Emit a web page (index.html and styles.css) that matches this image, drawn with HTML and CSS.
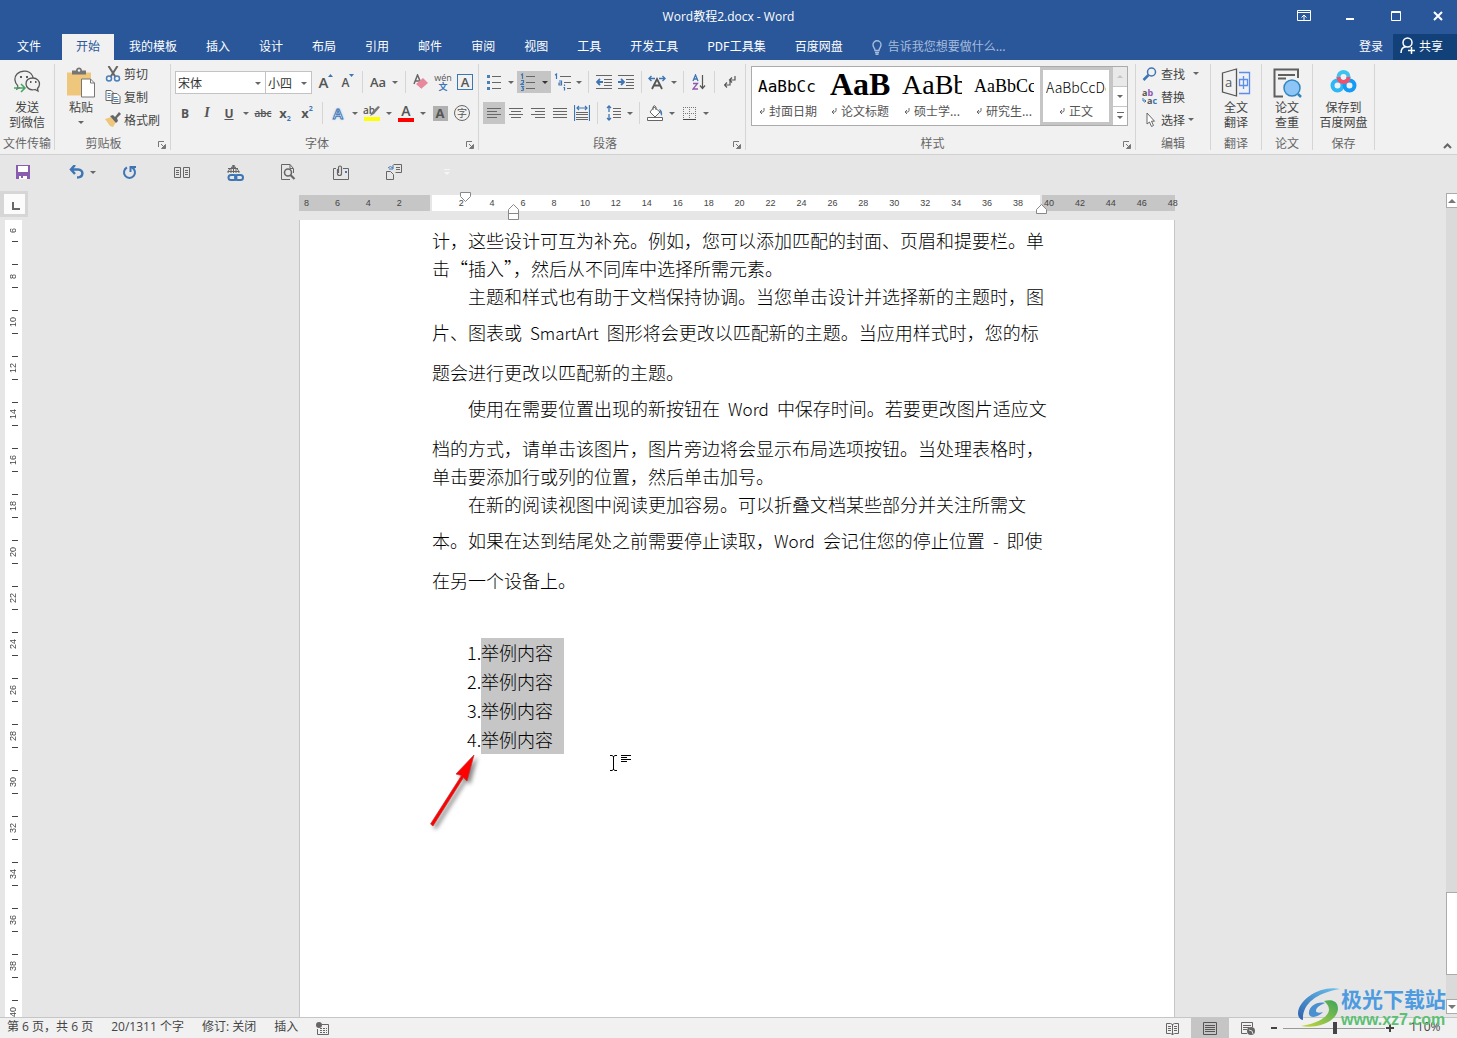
FILE: index.html
```html
<!DOCTYPE html>
<html lang="zh-CN">
<head>
<meta charset="utf-8">
<title>Word教程2.docx - Word</title>
<link rel="stylesheet" href="styles.css">
</head>
<body>
<svg class="defs" aria-hidden="true">
  <symbol id="launch" viewBox="0 0 8 8"><path d="M.5 6V.5H6" fill="none" stroke="#777"/><path d="M3 3l3 3M7.500 3.500v4h-4z" fill="#777" stroke="#777"/></symbol>
  <symbol id="ret" viewBox="0 0 6 6"><path d="M5 0v2.500q0 1.500-1.500 1.500H1M3 2L1 4l2 2" fill="none" stroke="#666"/></symbol>
</svg>

<header class="titlebar">
  <h1 class="doc-title">Word教程2.docx - Word</h1>
  <div class="win-buttons">
    <button class="win" aria-label="功能区显示选项"><svg width="14" height="12" viewBox="0 0 14 12" fill="none" stroke="#fff"><path d="M.5.5h13v10H.5zM.5 2.500h13M7 10V5M4.500 7.500L7 5l2.500 2.500"/></svg></button>
    <button class="win" aria-label="最小化"><svg width="10" height="12" viewBox="0 0 10 12"><path d="M1 8h8v2H1z" fill="#fff"/></svg></button>
    <button class="win" aria-label="最大化"><svg width="10" height="10" viewBox="0 0 10 10"><path d="M.5.5h9v9h-9zM0 1.500h10" fill="none" stroke="#fff"/></svg></button>
    <button class="win" aria-label="关闭"><svg width="10" height="10" viewBox="0 0 10 10"><path d="M1 1l8 8M9 1L1 9" stroke="#fff" stroke-width="2"/></svg></button>
  </div>
</header>

<nav class="tabs">
  <button class="tab file">文件</button>
  <button class="tab active">开始</button>
  <button class="tab">我的模板</button>
  <button class="tab">插入</button>
  <button class="tab">设计</button>
  <button class="tab">布局</button>
  <button class="tab">引用</button>
  <button class="tab">邮件</button>
  <button class="tab">审阅</button>
  <button class="tab">视图</button>
  <button class="tab">工具</button>
  <button class="tab">开发工具</button>
  <button class="tab">PDF工具集</button>
  <button class="tab">百度网盘</button>
  <label class="tell"><svg width="10" height="15" viewBox="0 0 10 15" fill="none" stroke="#a6bbdc" stroke-width="1.400"><path d="M3 10.500C3 8 1 7.500 1 4.800a4 4 0 0 1 8 0C9 7.500 7 8 7 10.500zM3 12.500h4M3.500 14.300h3"/></svg><input type="text" placeholder="告诉我您想要做什么..." aria-label="告诉我您想要做什么"></label>
  <a class="login" href="#">登录</a>
  <button class="share"><svg width="15" height="17" viewBox="0 0 15 17" fill="none" stroke="#fff" stroke-width="1.500"><circle cx="7.500" cy="5.500" r="4.500"/><path d="M1 16c0-4 2-6 5-6.500M8 13.500h7M11.500 10v7"/></svg>共享</button>
</nav>

<section class="ribbon">
  <div class="group g-send">
    <div class="content">
      <button class="big"><svg width="28" height="28" viewBox="0 0 28 28" fill="none" stroke="#5a5a5a" stroke-width="1.300"><path d="M5 17l-1 3 3-1.500M5 17C1 13 1 8 4 5c4-4 12-4 15 1 1 1.500 1 2 1 3"/><path d="M13 15c0-4 3-6 7-6s6.500 3 6.500 6c0 2-1 3.500-2 4.500l.5 2.500-3-1.500c-5 1.500-9-2-9-5.500z"/><path d="M7 8h2M13 8h2M17 13h1.500M22 13h1.500" stroke-width="2"/><path d="M1 19h10M8 15l4 4-4 4" stroke="#4aa564" stroke-width="1.600"/></svg><span>发送<br>到微信</span></button>
    </div>
    <div class="caption"><span>文件传输</span></div>
  </div>

  <div class="group g-clip">
    <div class="content row">
      <button class="big paste"><svg width="28" height="31" viewBox="0 0 28 31"><path d="M0 5h24v23H0z" fill="#eec67c"/><path d="M5 7V3h4c0-4 6-4 6 0h4v4z" fill="#757575"/><circle cx="12" cy="3" r="1.200" fill="#f1f1f1"/><path d="M14.500 11.500h9l4 4v14h-13z" fill="#fff" stroke="#777"/><path d="M23.500 11.500v4h4" fill="none" stroke="#777"/></svg><span>粘贴</span><i class="arrow"></i></button>
      <div class="stack">
        <button class="line"><svg width="15" height="16" viewBox="0 0 15 16" fill="none"><path d="M3 0l7 11M12 0L5 11" stroke="#666" stroke-width="2"/><circle cx="3.500" cy="12.500" r="2.500" stroke="#4a7fb8" stroke-width="1.500"/><circle cx="11.500" cy="12.500" r="2.500" stroke="#4a7fb8" stroke-width="1.500"/></svg>剪切</button>
        <button class="line"><svg width="15" height="15" viewBox="0 0 15 15" fill="#fff" stroke="#666"><path d="M.5 1.500h5l2 2v8h-7zM6.500 4.500h5l3 3v7h-8z"/><path d="M2 4.500h3M2 6.500h3M2 8.500h3M8 8.500h4M8 10.500h5M8 12.500h5" stroke="#4a7fb8"/></svg>复制</button>
        <button class="line"><svg width="16" height="15" viewBox="0 0 16 15"><path d="M0 7l6-2 5 5-3 5-3-1z" fill="#eec67c"/><path d="M5 4l3-1 2 2 4-5 2 2-4 4 1 3-2 2z" fill="#666"/></svg>格式刷</button>
      </div>
    </div>
    <div class="caption"><span>剪贴板</span><button class="launch" aria-label="剪贴板选项"><svg width="8" height="8"><use href="#launch"/></svg></button></div>
  </div>

  <div class="group g-font">
    <div class="content rows">
      <div class="row">
        <label class="combo face"><select aria-label="字体"><option>宋体</option></select></label>
        <label class="combo size"><select aria-label="字号"><option>小四</option></select></label>
        <button class="ib after-combo" aria-label="增大字号"><b class="big-a">A</b><svg class="tri" width="5" height="3"><path d="M0 3L2.500 0 5 3z" fill="#3e76b5"/></svg></button>
        <button class="ib" aria-label="减小字号"><b class="small-a">A</b><svg class="tri" width="5" height="3"><path d="M0 0h5L2.500 3z" fill="#3e76b5"/></svg></button>
        <i class="sep narrow"></i>
        <button class="ib case">Aa</button><button class="car" aria-label="更改大小写"></button>
        <i class="sep"></i>
        <button class="ib" aria-label="清除格式"><svg width="16" height="16" viewBox="0 0 16 16"><path d="M1 10L4.500 1 8 9M2 7h4" fill="none" stroke="#666" stroke-width="1.500"/><path d="M3 11l7-6 5 5-7 6z" transform="translate(0 -1)" fill="#e8889c"/><path d="M3 11l5 4" stroke="#f1f1f1"/></svg></button>
        <button class="ib pinyin"><span>wén</span><b>文</b></button>
        <button class="ib" aria-label="字符边框"><b class="boxed">A</b></button>
      </div>
      <div class="row">
        <button class="ib bold">B</button>
        <button class="ib ital">I</button>
        <button class="ib under">U</button><button class="car" aria-label="下划线样式"></button>
        <button class="ib strike">abc</button>
        <button class="ib script">x<sub>2</sub></button>
        <button class="ib script">x<sup>2</sup></button>
        <i class="sep"></i>
        <button class="ib glow">A</button><button class="car" aria-label="文本效果"></button>
        <button class="ib" aria-label="突出显示"><svg width="18" height="17" viewBox="0 0 18 17"><text x="0" y="9" class="ab">ab</text><path d="M7 11l2-4 6-6 2 1-6 7z" fill="#777"/><path d="M1 12h16v4H1z" fill="#ff0"/></svg></button><button class="car" aria-label="突出显示颜色"></button>
        <button class="ib colour">A</button><button class="car" aria-label="字体颜色"></button>
        <button class="ib" aria-label="字符底纹"><b class="shaded">A</b></button>
        <button class="ib" aria-label="带圈字符"><span class="ring">字</span></button>
      </div>
    </div>
    <div class="caption"><span>字体</span><button class="launch" aria-label="字体选项"><svg width="8" height="8"><use href="#launch"/></svg></button></div>
  </div>

  <div class="group g-para">
    <div class="content rows">
      <div class="row">
        <button class="ib" aria-label="项目符号"><svg width="14" height="16" viewBox="0 0 14 16"><path d="M5 2.500h9M5 8.500h9M5 14.500h9" stroke="#666"/><path d="M0 1h3v3H0zM0 7h3v3H0zM0 13h3v3H0z" fill="#4a7fb8"/></svg></button><button class="car" aria-label="项目符号库"></button>
        <button class="ib on" aria-label="编号"><svg width="16" height="18" viewBox="0 0 16 18"><path d="M6 3.500h9M6 9.500h9M6 15.500h9" stroke="#666"/><path d="M1 2l1.500-1v5M1 7.500h2.500v2L1 11.500h3M1 13.500h2.500l-1 1.500 1 .5-.5 2H1" fill="none" stroke="#3e76b5" stroke-width="1.200"/></svg></button><button class="car on" aria-label="编号库"></button>
        <button class="ib" aria-label="多级列表"><svg width="17" height="18" viewBox="0 0 17 18"><path d="M6 3.500h11M10 9.500h7M13 15.500h4" stroke="#666"/><path d="M1 2l1.500-1v5M5 8h2.500v4H5v-2h2.500M10.500 11.500v1.500M9.500 14.500h1v3" fill="none" stroke="#3e76b5" stroke-width="1.200"/></svg></button><button class="car" aria-label="多级列表库"></button>
        <i class="sep narrow"></i>
        <button class="ib" aria-label="减少缩进"><svg width="16" height="14" viewBox="0 0 16 14"><path d="M0 .5h16M8 4.500h8M8 7.500h8M8 10.500h8M0 13.500h16" stroke="#666"/><path d="M7 7H1M4 4L1 7l3 3" fill="none" stroke="#3e76b5" stroke-width="1.800"/></svg></button>
        <button class="ib" aria-label="增加缩进"><svg width="16" height="14" viewBox="0 0 16 14"><path d="M0 .5h16M8 4.500h8M8 7.500h8M8 10.500h8M0 13.500h16" stroke="#666"/><path d="M0 7h6M3 4l3 3-3 3" fill="none" stroke="#3e76b5" stroke-width="1.800"/></svg></button>
        <i class="sep"></i>
        <button class="ib" aria-label="中文版式"><svg width="18" height="15" viewBox="0 0 18 15" fill="none"><path d="M4 14L9 4l5 10M6 10.500h6" stroke="#555" stroke-width="1.800"/><path d="M7 3.500H1M3.500 1L1 3.500 3.500 6M11 3.500h6M14.500 1L17 3.500 14.500 6" stroke="#3e76b5" stroke-width="1.400"/></svg></button><button class="car" aria-label="版式选项"></button>
        <i class="sep narrow"></i>
        <button class="ib" aria-label="排序"><svg width="14" height="16" viewBox="0 0 14 16" fill="none"><path d="M1 7l2.500-6L6 7M2 5h3" stroke="#3e76b5" stroke-width="1.300"/><path d="M1 9.500h4.500L1 15h5" stroke="#8f57ae" stroke-width="1.300"/><path d="M10.500 1v13M8 11.500l2.500 3 2.500-3" stroke="#555" stroke-width="1.200"/></svg></button>
        <i class="sep"></i>
        <button class="ib" aria-label="显示编辑标记"><svg width="12" height="12" viewBox="0 0 12 12" fill="none" stroke="#555" stroke-width="1.200"><path d="M11 0v4H6M8 1.500L5.500 4 8 6.500M6 5v4H1M3 6.500L.5 9 3 11.500"/></svg></button>
      </div>
      <div class="row">
        <button class="ib on" aria-label="左对齐"><svg width="15" height="11"><path d="M0 .5h14M0 3.500h10M0 6.500h14M0 9.500h10" stroke="#666"/></svg></button>
        <button class="ib" aria-label="居中"><svg width="15" height="11"><path d="M0 .5h14M2 3.500h10M0 6.500h14M2 9.500h10" stroke="#666"/></svg></button>
        <button class="ib" aria-label="右对齐"><svg width="15" height="11"><path d="M0 .5h14M4 3.500h10M0 6.500h14M4 9.500h10" stroke="#666"/></svg></button>
        <button class="ib" aria-label="两端对齐"><svg width="15" height="11"><path d="M0 .5h14M0 3.500h14M0 6.500h14M0 9.500h14" stroke="#666"/></svg></button>
        <button class="ib" aria-label="分散对齐"><svg width="16" height="16" viewBox="0 0 16 16" fill="none"><path d="M.5 0v16M15.500 0v16M3 3h10M5 1L3 3l2 2M11 1l2 2-2 2" stroke="#3e76b5" stroke-width="1.200"/><path d="M2 7.500h12M2 9.500h12M2 12.500h12M2 14.500h12" stroke="#666"/></svg></button>
        <i class="sep"></i>
        <button class="ib" aria-label="行距"><svg width="15" height="16" viewBox="0 0 15 16" fill="none"><path d="M7 3.500h8M7 6.500h8M7 9.500h8M7 12.500h8" stroke="#666"/><path d="M3 1v6M1 3l2-2 2 2M3 9v6M1 13l2 2 2-2" stroke="#3e76b5" stroke-width="1.300"/></svg></button><button class="car" aria-label="行距选项"></button>
        <i class="sep narrow"></i>
        <button class="ib" aria-label="底纹"><svg width="17" height="16" viewBox="0 0 17 16" fill="#fff" stroke="#666"><path d="M7 2l6 5-5 5-5-5z"/><path d="M6 5V2q1-3 3 0v3" fill="none"/><path d="M12 4q4 1 3 7-2-2-2-5z" fill="#3e76b5" stroke="none"/><path d="M.5 12.500h15v3H.5z"/></svg></button><button class="car" aria-label="底纹颜色"></button>
        <button class="ib" aria-label="边框"><svg width="13" height="13" viewBox="0 0 13 13" fill="none" stroke="#777"><path d="M.5 0v12M6.500 0v12M12.500 0v12M0 .5h13M0 6.500h13" stroke-dasharray="1 1"/><path d="M0 12.500h13" stroke="#444"/></svg></button><button class="car" aria-label="边框样式"></button>
      </div>
    </div>
    <div class="caption"><span>段落</span><button class="launch" aria-label="段落选项"><svg width="8" height="8"><use href="#launch"/></svg></button></div>
  </div>

  <div class="group g-style">
    <div class="content">
      <div class="gallery">
        <button class="style"><span class="sample hei">AaBbCc</span><span class="name"><svg width="6" height="6"><use href="#ret"/></svg>封面日期</span></button>
        <button class="style"><span class="sample thesis">AaBb</span><span class="name"><svg width="6" height="6"><use href="#ret"/></svg>论文标题</span></button>
        <button class="style"><span class="sample master">AaBb</span><span class="name"><svg width="6" height="6"><use href="#ret"/></svg>硕士学...</span></button>
        <button class="style"><span class="sample grad">AaBbCc</span><span class="name"><svg width="6" height="6"><use href="#ret"/></svg>研究生...</span></button>
        <button class="style chosen"><span class="sample body">AaBbCcDd</span><span class="name"><svg width="6" height="6"><use href="#ret"/></svg>正文</span></button>
        <div class="scroller">
          <button class="up" aria-label="上一行"></button>
          <button class="down" aria-label="下一行"></button>
          <button class="more" aria-label="其他样式"></button>
        </div>
      </div>
    </div>
    <div class="caption"><span>样式</span><button class="launch" aria-label="样式选项"><svg width="8" height="8"><use href="#launch"/></svg></button></div>
  </div>

  <div class="group g-edit">
    <div class="content">
      <div class="stack">
        <button class="line"><svg width="15" height="14" viewBox="0 0 15 14" fill="none" stroke="#3e76b5"><circle cx="9" cy="5" r="4" stroke-width="1.500"/><path d="M6 8l-5 5" stroke-width="2.500"/></svg>查找<i class="arrow far"></i></button>
        <button class="line"><svg width="16" height="16" viewBox="0 0 16 16"><text x="0" y="7" class="rep">a<tspan class="purple">b</tspan></text><text x="5" y="15" class="rep">a<tspan class="blue">c</tspan></text><path d="M1 9v3h3M2.500 10.500L4 12l-1.500 1.500" fill="none" stroke="#3e76b5"/></svg>替换</button>
        <button class="line"><svg width="15" height="15" viewBox="0 0 15 15" fill="#fff" stroke="#666"><path d="M4.500 1v11l2.500-2 2 4.500 2-1-2-4.300h3z"/></svg>选择<i class="arrow"></i></button>
      </div>
    </div>
    <div class="caption"><span>编辑</span></div>
  </div>

  <div class="group g-tool">
    <div class="content">
      <button class="big"><svg width="30" height="30" viewBox="0 0 30 30" fill="none"><path d="M1.500 5L15.500 1v27l-14-4z" stroke="#555" stroke-width="1.300"/><path d="M18 4.500h10.500v21H18" stroke="#5b8def" stroke-width="1.300"/><text x="4" y="19" class="tr-a">a</text><path d="M18.500 11.500h8v6h-8zM22.500 8v13" stroke="#5b8def" stroke-width="1.300"/></svg><span>全文<br>翻译</span></button>
    </div>
    <div class="caption"><span>翻译</span></div>
  </div>
  <div class="group g-tool">
    <div class="content">
      <button class="big"><svg width="30" height="30" viewBox="0 0 30 30" fill="none"><path d="M26 10V1.500H2.500v27H11M6 7h17M6 10.500h8" stroke="#5f5f5f" stroke-width="2"/><circle cx="20" cy="20" r="8" fill="#8ec5f7" stroke="#2f86c0" stroke-width="1.500"/><path d="M26 26l3 3" stroke="#2f86c0" stroke-width="2.500"/></svg><span>论文<br>查重</span></button>
    </div>
    <div class="caption"><span>论文</span></div>
  </div>
  <div class="group g-save">
    <div class="content">
      <button class="big"><svg width="28" height="28" viewBox="0 0 28 28" fill="none" stroke-width="4"><circle cx="7.500" cy="16.500" r="5" stroke="#2db8f5"/><circle cx="19.500" cy="16.500" r="5" stroke="#149bf5"/><circle cx="13.500" cy="8" r="5" stroke="#3cc3f0"/><path d="M8.500 8a5 5 0 0 0 10 0" stroke="#f14f6c"/></svg><span>保存到<br>百度网盘</span></button>
    </div>
    <div class="caption"><span>保存</span></div>
  </div>
  <button class="collapse" aria-label="折叠功能区"><svg width="9" height="6"><path d="M1 5l3.500-3.500L8 5" fill="none" stroke="#666" stroke-width="2"/></svg></button>
</section>

<div class="quick">
  <div class="slot"><button class="ib" aria-label="保存"><svg width="14" height="14" viewBox="0 0 14 14"><path d="M0 0h14v14H0z" fill="#8a5cb0"/><path d="M2 1h10v6H2zM3 9h8v5H3z" fill="#fff"/><path d="M3 9h8v2H3zM5 11h2v2H5z" fill="#8a5cb0"/></svg></button></div>
  <div class="slot"><button class="ib" aria-label="撤消"><svg width="15" height="14" viewBox="0 0 15 14" fill="none" stroke="#3e76b5" stroke-width="2.500"><path d="M6 0L2 4.500 6 9M2 4.500h7c6 0 6 8-1 8"/></svg></button><button class="car" aria-label="撤消列表"></button></div>
  <div class="slot"><button class="ib" aria-label="恢复"><svg width="15" height="15" viewBox="0 0 15 15" fill="none" stroke="#3e76b5" stroke-width="2"><path d="M5 2.500a5.500 5.500 0 1 0 5 0M8.500 7V2H14"/></svg></button></div>
  <div class="slot"><button class="ib" aria-label="阅读视图"><svg width="16" height="11" viewBox="0 0 16 11" fill="none" stroke="#666"><path d="M.5.500h6v10h-6zM9.500.500h6v10h-6zM2 3.500h3M2 5.500h3M2 7.500h3M11 3.500h3M11 5.500h3M11 7.500h3"/></svg></button></div>
  <div class="slot"><button class="ib" aria-label="超链接"><svg width="17" height="17" viewBox="0 0 17 17" fill="none" stroke="#666"><path d="M1 9a5.500 5.500 0 1 1 11 0M1 4.500h10M.5 7.500h12M6.500 1v8M4 9q-1-4 2-8M9 9q1-4-2-8"/><rect x="1.500" y="11" width="8" height="5" rx="2.500" stroke="#3e76b5" stroke-width="2"/><rect x="8" y="11" width="8" height="5" rx="2.500" stroke="#3e76b5" stroke-width="2"/></svg></button></div>
  <div class="slot"><button class="ib" aria-label="打印预览"><svg width="15" height="16" viewBox="0 0 15 16" fill="none" stroke="#666"><path d="M12.500 9V4.500L9 .5H.5v15H9M9 .5v4h3"/><circle cx="7" cy="8.500" r="3.500" stroke-width="1.600"/><path d="M9.500 11l4 4" stroke-width="2.200"/></svg></button></div>
  <div class="slot"><button class="ib" aria-label="邮件附件"><svg width="16" height="15" viewBox="0 0 16 15" fill="none" stroke="#666"><path d="M3 3.500H.5v11h15v-11H10"/><path d="M4.500 4v4.500a2 2 0 0 0 4 0V2.500a1.500 1.500 0 0 0-3 0V8" stroke-width="1.200"/><path d="M12 6h2v2h-2z" fill="#3e76b5" stroke="none"/></svg></button></div>
  <div class="slot"><button class="ib" aria-label="插入文档"><svg width="16" height="16" viewBox="0 0 16 16" fill="none" stroke="#666"><path d="M.5 7.500h4l3 3v5h-7zM7.500.500h8v8h-6M10 3.500h4M10 5.500h4"/><path d="M2 4q2-3 5 0M7 1v4H3" stroke="#3e76b5"/></svg></button></div>
  <div class="slot"><button class="ib faint" aria-label="自定义快速访问工具栏"><svg width="6" height="7"><path d="M0 .5h6" stroke="#f6f6f6"/><path d="M0 3h6L3 6z" fill="#f6f6f6"/></svg></button></div>
</div>

<main class="workspace">
  <aside class="side">
    <button class="tabstop" aria-label="左对齐制表符"><svg width="8" height="8"><path d="M1 0v7h7" fill="none" stroke="#666" stroke-width="2"/></svg></button>
    <div class="vruler">
      <span>6</span><span>8</span><span>10</span><span>12</span><span>14</span><span>16</span><span>18</span><span>20</span><span>22</span><span>24</span><span>26</span><span>28</span><span>30</span><span>32</span><span>34</span><span>36</span><span>38</span><span>40</span>
    </div>
  </aside>
  <div class="canvas">
    <div class="hruler">
      <div class="bands"><i class="dim left"></i><i class="lit"></i><i class="dim right"></i></div>
      <div class="nums"><span>8</span><span>6</span><span>4</span><span>2</span><span></span><span>2</span><span>4</span><span>6</span><span>8</span><span>10</span><span>12</span><span>14</span><span>16</span><span>18</span><span>20</span><span>22</span><span>24</span><span>26</span><span>28</span><span>30</span><span>32</span><span>34</span><span>36</span><span>38</span><span>40</span><span>42</span><span>44</span><span>46</span><span>48</span></div>
      <svg class="mark first" width="11" height="10"><path d="M.5.500h10v4l-5 5-5-5z" fill="#fff" stroke="#888"/></svg>
      <svg class="mark hang" width="11" height="16"><path d="M.5 15.500v-10l5-5 5 5v10zM.5 9.500h10" fill="#fff" stroke="#888"/></svg>
      <svg class="mark end" width="11" height="10"><path d="M.5 9.500v-4l5-5 5 5v4z" fill="#fff" stroke="#888"/></svg>
    </div>
    <article class="page">
      <p><span class="ln">计，这些设计可互为补充。例如，您可以添加匹配的封面、页眉和提要栏。单</span>
      <span class="ln">击“插入”，然后从不同库中选择所需元素。</span></p>
      <p><span class="ln indent">主题和样式也有助于文档保持协调。当您单击设计并选择新的主题时，图</span>
      <span class="ln tall">片、图表或<span class="en">SmartArt</span>图形将会更改以匹配新的主题。当应用样式时，您的标</span>
      <span class="ln">题会进行更改以匹配新的主题。</span></p>
      <p><span class="ln tall indent">使用在需要位置出现的新按钮在<span class="en">Word</span>中保存时间。若要更改图片适应文</span>
      <span class="ln">档的方式，请单击该图片，图片旁边将会显示布局选项按钮。当处理表格时，</span>
      <span class="ln">单击要添加行或列的位置，然后单击加号。</span></p>
      <p><span class="ln indent">在新的阅读视图中阅读更加容易。可以折叠文档某些部分并关注所需文</span>
      <span class="ln tall">本。如果在达到结尾处之前需要停止读取，<span class="en first-en">Word</span>会记住您的停止位置<span class="en">-</span>即使</span>
      <span class="ln">在另一个设备上。</span></p>
      <ol class="examples">
        <li><span class="no">1.</span><mark>举例内容</mark></li>
        <li><span class="no">2.</span><mark>举例内容</mark></li>
        <li><span class="no">3.</span><mark>举例内容</mark></li>
        <li><span class="no">4.</span><mark>举例内容</mark></li>
      </ol>
      <svg class="pointer" width="60" height="84" viewBox="0 0 60 84"><path d="M48 2L30 21l5.500 1.500L4.500 71 7 73l30.500-48.500L41 28z" fill="#f00" stroke="#b33" stroke-width=".7"/></svg>
      <svg class="caretmark" width="22" height="16" viewBox="0 0 22 16"><path d="M0 .5h2l1.500 1 1.500-1h2M3.500 1v14M0 15.500h2l1.500-1 1.500 1h2M11 .5h10M11 2.500h6M11 4.500h10M11 6.500h6" fill="none" stroke="#000"/></svg>
    </article>
  </div>
  <div class="scrollbar">
    <button class="sb up" aria-label="向上滚动"></button>
    <div class="trough"></div>
    <div class="thumb"></div>
    <div class="trough-end"></div>
    <button class="sb down" aria-label="向下滚动"></button>
  </div>
</main>

<footer class="status">
  <span>第 6 页，共 6 页</span>
  <span>20/1311 个字</span>
  <span>修订: 关闭</span>
  <span>插入</span>
  <svg width="13" height="13" viewBox="0 0 13 13" fill="none" stroke="#666"><path d="M6 2.500h6.500v10h-11V7"/><path d="M4 6.500h7M4 8.500h7M4 10.500h7" stroke-dasharray="2 1"/><circle cx="3" cy="3" r="3" fill="#666" stroke="none"/></svg>
  <div class="views">
    <button class="view" aria-label="阅读视图"><svg width="13" height="13" viewBox="0 0 13 13" fill="none" stroke="#666"><path d="M6.500 2v11M.5 1.500h4l2 1 2-1h4v10h-4l-2 1-2-1h-4zM2 4.500h3M2 6.500h3M2 8.500h3M8 4.500h3M8 6.500h3M8 8.500h3"/></svg></button>
    <button class="view on" aria-label="页面视图"><svg width="14" height="13" viewBox="0 0 14 13" fill="none" stroke="#555"><path d="M.5.500h13v12H.5zM2 3.500h10M2 5.500h10M2 7.500h10M2 9.500h10"/></svg></button>
    <button class="view" aria-label="Web 版式视图"><svg width="14" height="13" viewBox="0 0 14 13" fill="none" stroke="#666"><path d="M11.500 5V.5H.5v11H6M2 3.500h8M2 5.500h6M2 7.500h4"/><circle cx="10" cy="9" r="4" fill="#666" stroke="none"/><path d="M8 8l3 1 1 3" stroke="#ddd"/></svg></button>
  </div>
  <button class="zoom-step" aria-label="缩小"><svg width="6" height="6"><path d="M0 3h6" stroke="#444" stroke-width="2"/></svg></button>
  <input class="zoom" type="range" min="0" max="100" value="51" aria-label="显示比例">
  <button class="zoom-step" aria-label="放大"><svg width="8" height="8"><path d="M0 4h8M4 0v8" stroke="#444" stroke-width="2"/></svg></button>
  <span class="percent">110%</span>
</footer>

<div class="badge">
  <svg width="44" height="42" viewBox="0 0 44 42"><defs><linearGradient id="sea" x1="0" y1="1" x2="1" y2="0"><stop offset="0" stop-color="#2e62ae"/><stop offset="1" stop-color="#6cc4ee"/></linearGradient><linearGradient id="leaf" x1="0" y1="1" x2="1" y2="0"><stop offset="0" stop-color="#c6d83c"/><stop offset="1" stop-color="#3fa45c"/></linearGradient></defs><path d="M43 2C24-2 2 12 1 26c0 5 3 7 5 7C5 18 18 6 43 2z" fill="url(#sea)"/><path d="M27 14c8-2 14 0 14 8C40 34 22 42 4 39c14-2 27-8 28-16 0-5-3-7-5-9z" fill="url(#leaf)"/><path d="M28 16c-8-2-17 4-16 11 1 5 10 3 14-2-3 1-7 1-7-1 0-4 5-6 9-8z" fill="#4a8fd0"/></svg>
  <div class="badge-text"><b>极光下载站</b><span>www.xz7.com</span></div>
</div>
</body>
</html>
```
FILE: styles.css
```css
* { box-sizing: border-box; }
body {
  margin: 0;
  height: 100vh;
  display: flex;
  flex-direction: column;
  position: relative;
  overflow: hidden;
  background: #e6e6e6;
  color: #444;
  font: 12px/15px "Noto Sans CJK SC", sans-serif;
}
button, input, select { font: inherit; color: inherit; border: 0; padding: 0; margin: 0; background: none; }
svg { display: block; flex: none; }
.defs { position: absolute; width: 0; height: 0; }
.row { display: flex; align-items: center; }

/* title bar */
.titlebar { display: grid; grid-template-columns: 1fr auto 1fr; height: 34px; align-items: center; background: #2a579a; color: #fff; flex: none; padding-bottom: 2px; }
.doc-title { grid-column: 2; margin: 0; font: 400 12px/15px "Open Sans", "Noto Sans CJK SC", sans-serif; }
.win-buttons { grid-column: 3; display: flex; justify-content: flex-end; }
.win { width: 46px; height: 30px; display: grid; place-items: center; }
.win:last-child { width: 38px; }

.tabs { display: flex; gap: 1px; height: 26px; flex: none; padding-left: 3px; background: #2a579a; color: #fff; }
.tab { padding: 0 14px 4px; white-space: nowrap; }
.tab.file { margin-right: 6px; }
.tab.active { background: #f1f1f1; color: #2a579a; }
.tell { display: flex; align-items: center; gap: 6px; margin-left: 14px; flex: 1; }
.tell input { width: 140px; padding-bottom: 3px; outline: 0; }
.tell input::placeholder { color: #a6bbdc; opacity: 1; }
.login { color: #fff; text-decoration: none; align-self: center; margin-right: 9px; padding-bottom: 4px; }
.share { display: flex; align-items: center; gap: 4px; width: 64px; padding: 0 0 4px 7px; background: #124078; }

/* ribbon */
.ribbon { display: flex; height: 95px; flex: none; padding: 4px 0; background: #f1f1f1; border-bottom: 1px solid #d0d0d0; }
.group { display: flex; flex-direction: column; height: 86px; border-right: 1px solid #d5d5d5; flex: none; }
.content { height: 71px; }
.content.row { align-items: flex-start; }
.caption { display: flex; position: relative; justify-content: center; color: #666; white-space: nowrap; padding-top: 1px; }
.launch { position: absolute; right: 4px; top: 7px; }
.g-send { width: 55px; }
.g-clip { width: 116px; }
.g-clip .caption { padding-right: 18px; }
.g-font { width: 308px; padding-left: 3px; }
.g-font .caption, .g-para .caption { padding-right: 18px; }
.g-para { width: 267px; padding-left: 4px; }
.g-style { width: 390px; padding: 2px 7px 0 5px; }
.g-style .content { height: 69px; }
.g-style .caption { padding-right: 14px; }
.g-style .launch { right: -3px; }
.g-edit { width: 75px; }
.g-tool { width: 51px; }
.g-save { width: 62px; }
.big { width: 100%; display: flex; flex-direction: column; align-items: center; padding-top: 3px; }
.big svg { height: 32px; }
.big span { white-space: nowrap; }
.big.paste { width: 50px; padding-left: 2px; }
.arrow { width: 0; height: 0; border: 3px solid transparent; border-top-color: #666; border-bottom: 0; }
.paste .arrow { margin-top: 7px; }
.line .arrow.far { margin-left: 5px; }
.stack { display: flex; flex-direction: column; }
.line { display: flex; align-items: center; gap: 3px; height: 23px; padding-bottom: 4px; white-space: nowrap; }
.g-clip .line svg, .g-edit .line svg { width: 16px; }
.g-edit .stack { padding-left: 6px; }
.rows { display: flex; flex-direction: column; gap: 7px; padding-top: 6px; }
.rows .row { height: 24px; }

.ib { width: 22px; height: 22px; display: flex; align-items: center; justify-content: center; flex: none; color: #555; font-family: "Open Sans", sans-serif; }
.car { width: 12px; height: 22px; display: grid; place-items: center; flex: none; }
.car::before { content: ""; border: 3px solid transparent; border-top-color: #666; border-bottom: 0; }
.on { background: #c5c5c5; }
.car.on::before { border-top-color: #333; }
.sep { width: 1px; height: 22px; margin: 0 4px; background: #d5d5d5; flex: none; }
.sep.narrow { margin: 0 4px 0 3px; }
.combo { position: relative; height: 23px; border: 1px solid #c3c3c3; background: #fff; color: #333; }
.combo.face { width: 91px; margin-left: 1px; }
.combo.size { width: 47px; margin-left: -1px; }
.combo select { appearance: none; width: 100%; height: 100%; padding-left: 2px; outline: 0; }
.combo::after { content: ""; position: absolute; right: 4px; top: 10px; border: 3px solid transparent; border-top-color: #666; border-bottom: 0; pointer-events: none; }
.after-combo { margin-left: 3px; }
.tri { align-self: flex-start; margin-top: 3px; }
.big-a { font-size: 15px; font-weight: 600; }
.small-a { font-size: 12px; font-weight: 600; }
.case { font-size: 13px; font-weight: 600; }
.pinyin { flex-direction: column; font-size: 9px; line-height: 8px; }
.pinyin b { color: #3e76b5; font: 700 9px/9px "Noto Sans CJK SC", sans-serif; }
.boxed { border: 1px solid #3e76b5; width: 16px; line-height: 14px; font-size: 13px; font-weight: 600; text-align: center; }
.bold { font-weight: 700; }
.ital { font: italic 700 14px "Liberation Serif", serif; }
.under { font-weight: 700; text-decoration: underline; }
.strike { font-size: 10px; font-weight: 600; text-decoration: line-through; }
.script { font-weight: 700; font-size: 13px; }
.script sub, .script sup { font-size: 7px; line-height: 7px; color: #3e76b5; }
.script sub { align-self: flex-end; margin-bottom: 2px; }
.script sup { align-self: flex-start; margin-top: 3px; }
.glow { font-size: 15px; font-weight: 600; color: #fff; -webkit-text-stroke: 1px #3e76b5; text-shadow: 0 0 3px #8db8e6; }
.ab { font: 600 10px "Open Sans", sans-serif; fill: #555; }
.colour { font-size: 14px; font-weight: 600; line-height: 14px; border-bottom: 4px solid #f00; width: 16px; height: 18px; margin: 0 3px; }
.shaded { width: 15px; line-height: 15px; font-size: 13px; background: #b0b0b0; text-align: center; }
.ring { width: 16px; height: 16px; border: 1px solid #666; border-radius: 50%; font: 10px/13px "Noto Sans CJK SC", sans-serif; text-align: center; }
.rep { font: 700 9px "Open Sans", sans-serif; fill: #555; }
.purple { fill: #8f57ae; }
.blue { fill: #3e76b5; }
.tr-a { font: 13px "Open Sans", sans-serif; fill: #555; }

.gallery { display: flex; height: 60px; border: 1px solid #ababab; background: #fff; }
.style { width: 72px; height: 58px; display: flex; flex-direction: column; align-items: center; flex: none; }
.sample { width: 60px; height: 33px; margin-top: 3px; overflow: hidden; color: #000; text-align: left; white-space: nowrap; line-height: 33px; }
.chosen { border: 3px solid #c5c5c5; }
.chosen .sample { margin-top: 0; }
.hei { font: 16px/34px "DejaVu Sans Mono", monospace; }
.thesis { font: 700 32px/29px "Liberation Serif", serif; }
.master { font: 28px/29px "Liberation Serif", serif; }
.grad { font: 18px/33px "Liberation Serif", serif; }
.body { font: 300 14px/34px "Noto Sans CJK SC", sans-serif; }
.name { display: flex; align-items: center; gap: 4px; color: #555; white-space: nowrap; }
.scroller { flex: 1; border-left: 1px solid #c5c5c5; display: grid; grid-template-rows: 1fr 1fr 1fr; }
.scroller button { display: grid; place-content: center; justify-items: center; gap: 3px; }
.scroller button + button { border-top: 1px solid #c5c5c5; }
.scroller .up { background: #e9e9e9; }
.scroller button::after { content: ""; border: 3px solid transparent; border-top-color: #666; border-bottom: 0; }
.scroller .up::after { border: 3px solid transparent; border-bottom-color: #c5c5c5; border-top: 0; }
.scroller .more::before { content: ""; width: 7px; height: 1px; background: #666; }
.collapse { margin: auto 5px 1px auto; }

/* quick access */
.quick { display: flex; height: 36px; flex: none; align-items: center; padding: 0 0 2px 12px; }
.slot { width: 53px; display: flex; flex: none; }

/* workspace */
.workspace { display: flex; flex: 1; min-height: 0; overflow: hidden; }
.side { width: 28px; flex: none; display: flex; flex-direction: column; gap: 3px; overflow: hidden; }
.tabstop { width: 28px; height: 26px; flex: none; display: grid; place-items: center; padding: 4px 0 0 3px; background: #fbfbfb; border: 3px solid #d6d6d6; border-left-width: 4px; }
.vruler { width: 17px; margin-left: 5px; flex: 1; min-height: 0; overflow: hidden; background: #fff; color: #444; }
.vruler span { display: flex; align-items: center; height: 46px; padding-top: 26px; writing-mode: vertical-rl; transform: rotate(180deg); justify-content: center; font: 9px/17px "Liberation Sans", sans-serif; background: linear-gradient(#444, #444) 4px 1px / 6px 1px no-repeat, linear-gradient(#444, #444) 4px 24px / 6px 1px no-repeat; }
.canvas { flex: 1; min-width: 0; display: flex; flex-direction: column; align-items: center; }
.hruler { position: relative; display: grid; width: 876px; height: 16px; margin: 4px 0 9px; flex: none; }
.bands, .nums { grid-area: 1 / 1; display: flex; }
.bands { gap: 2px; }
.dim { background: #c6c6c6; }
.dim.left { width: 131px; }
.dim.right { width: 133px; }
.lit { flex: 1; background: #fff; }
.nums { margin: 0 -13px 0 -8px; font: 9px/16px "Liberation Sans", sans-serif; }
.nums span { flex: 1 1 0; text-align: center; }
.mark { position: absolute; }
.mark.first { left: 161px; top: -3px; }
.mark.hang { left: 209px; top: 9px; }
.mark.end { left: 737px; top: 9px; }

.page { position: relative; width: 876px; flex: 1; min-height: 0; padding: 6px 0 0 132px; background: #fff; border: solid #c6c6c6; border-width: 0 1px; color: #000; font-size: 18px; line-height: 28px; font-weight: 300; }
.page p { margin: 0; }
.ln { display: block; white-space: nowrap; }
.tall { padding: 8px 0 11px; }
.indent { padding-left: 36px; }
.en { font-size: 17px; margin: 0 8px; }
.first-en { margin-left: 0; }
.examples { list-style: none; margin: 44px 0 0; padding: 0 0 0 35px; line-height: 29px; }
.examples li { display: flex; }
.no { width: 14px; }
.examples mark { background: #c6c6c6; color: inherit; width: 83px; }
.pointer { position: absolute; left: 126px; top: 533px; filter: drop-shadow(3px 3px 2px #888); }
.caretmark { position: absolute; left: 310px; top: 535px; }

.scrollbar { width: 11px; flex: none; display: flex; flex-direction: column; padding: 2px 0 3px; }
.sb { height: 15px; flex: none; display: grid; place-items: center; background: #fff; border: 1px solid #ababab; border-right: 0; }
.sb::before { content: ""; border: 4px solid transparent; border-top: 0; border-bottom-color: #777; }
.sb.down::before { border: 4px solid transparent; border-bottom: 0; border-top-color: #777; }
.trough { flex: 1; background: #dadada; }
.thumb { height: 83px; background: #fff; border: 1px solid #ababab; border-right: 0; }
.trough-end { height: 24px; background: #dadada; }

/* status bar */
.status { display: flex; align-items: center; gap: 18px; height: 21px; flex: none; padding: 0 14px 0 7px; background: #f1f1f1; border-top: 1px solid #c6c6c6; white-space: nowrap; font-family: "Open Sans", "Noto Sans CJK SC", sans-serif; }
.status span { padding-bottom: 3px; }
.views { display: flex; margin-left: auto; height: 20px; margin-right: -14px; }
.view { width: 38px; display: grid; place-items: center; }
.status .zoom-step { flex: none; margin: 0 -12px 0 0; }
.zoom { appearance: none; width: 102px; height: 12px; }
.zoom::-webkit-slider-runnable-track { height: 12px; background: linear-gradient(#999, #999) 0 6px / 100% 1px no-repeat; }
.zoom::-webkit-slider-thumb { appearance: none; width: 4px; height: 12px; background: #444; }
.status .zoom + .zoom-step { margin-left: -17px; margin-right: -2px; }
.percent { width: 33px; }

.badge { position: absolute; right: 10px; bottom: 8px; display: flex; pointer-events: none; }
.badge-text { width: 106px; display: flex; flex-direction: column; color: #4d9be0; white-space: nowrap; }
.badge-text b { font-size: 21px; line-height: 23px; }
.badge-text span { color: #5cbf74; font: 700 16px/20px "Liberation Sans", sans-serif; }
```
